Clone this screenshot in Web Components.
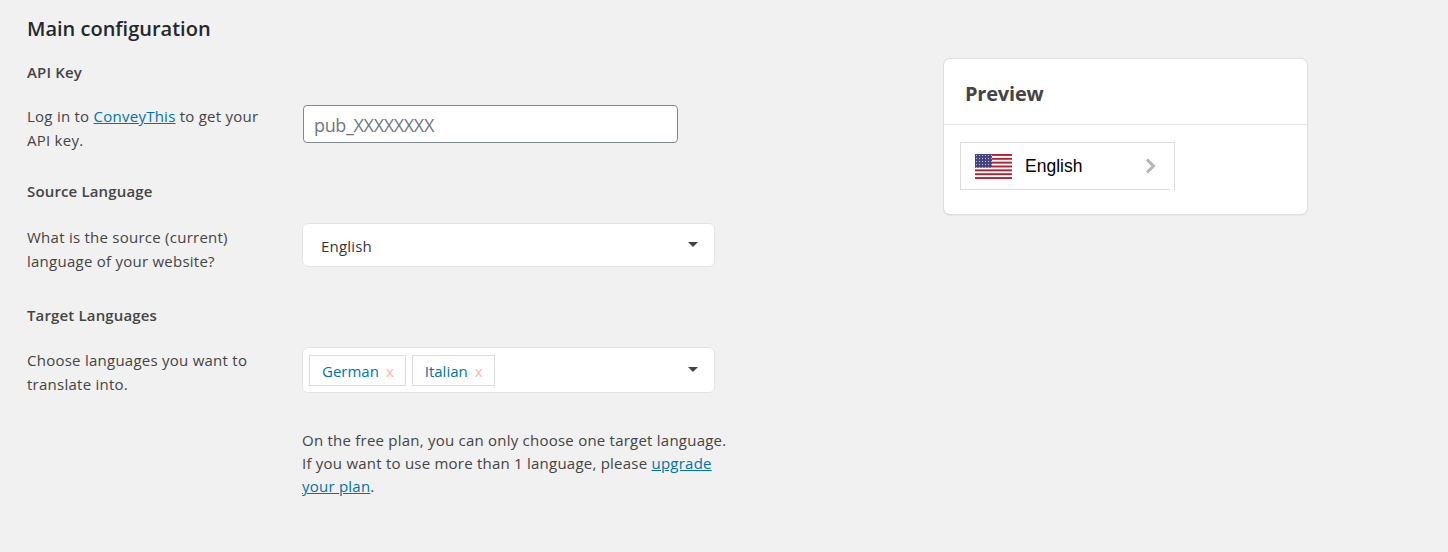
<!DOCTYPE html>
<html lang="en">
<head>
<meta charset="utf-8">
<title>Main configuration</title>
<style>
    html, body { margin: 0; background: #f1f1f1; }
    body { font-family: "Open Sans", "Noto Sans", sans-serif; font-size: 15px; letter-spacing: 0.25px; color: #444; }
    a { color: #0073aa; text-decoration: underline; }
</style>
</head>
<body>
<conf-page>
    <conf-title slot="title">Main configuration</conf-title>

    <conf-field heading="API Key" style="--top:21px; --head-gap:23px">
        <span slot="desc">Log in to <a href="#">ConveyThis</a> to get your<br>API key.</span>
        <conf-input placeholder="pub_XXXXXXXX"></conf-input>
    </conf-field>

    <conf-field heading="Source Language" style="--top:30px; --head-gap:25px; --select-top:-2px">
        <span slot="desc">What is the source (current)<br>language of your website?</span>
        <conf-select>English</conf-select>
    </conf-field>

    <conf-field heading="Target Languages" style="--top:33px; --head-gap:24px; --select-top:-1px">
        <span slot="desc">Choose languages you want to<br>translate into.</span>
        <conf-select multi>
            <conf-tag>German</conf-tag>
            <conf-tag>Italian</conf-tag>
        </conf-select>
    </conf-field>

    <conf-note>On the free plan, you can only choose one target language.<br>If you want to use more than 1 language, please <a href="#">upgrade<br>your plan</a>.</conf-note>

    <preview-card slot="side" heading="Preview">
        <lang-button>English</lang-button>
    </preview-card>
</conf-page>

<script>
class ConfPage extends HTMLElement {
    constructor() {
        super();
        this.attachShadow({ mode: 'open' });
        this.shadowRoot.innerHTML = `
            <style>
                :host { display: flex; height: 552px; box-sizing: border-box; padding-left: 27px; overflow: hidden; }
                .main { width: 917px; flex: none; padding-top: 16px; }
                .side { padding-top: 59px; }
            </style>
            <div class="main"><slot name="title"></slot><slot></slot></div>
            <div class="side"><slot name="side"></slot></div>
        `;
    }
}

class ConfTitle extends HTMLElement {
    constructor() {
        super();
        this.attachShadow({ mode: 'open' });
        this.shadowRoot.innerHTML = `
            <style>
                :host { display: block; font-size: 20px; font-weight: 600; line-height: 26px; color: #23282d; letter-spacing: 0; }
            </style>
            <slot></slot>
        `;
    }
}

class ConfField extends HTMLElement {
    constructor() {
        super();
        this.attachShadow({ mode: 'open' });
        this.shadowRoot.innerHTML = `
            <style>
                :host { display: block; margin-top: var(--top, 30px); }
                h3 { margin: 0 0 var(--head-gap, 24px); font-size: 15px; font-weight: 600; line-height: 18px; color: #444; letter-spacing: 0.15px; }
                .row { display: grid; grid-template-columns: 275px 1fr; }
                .desc { line-height: 24px; }
            </style>
            <h3></h3>
            <div class="row">
                <div class="desc"><slot name="desc"></slot></div>
                <div><slot></slot></div>
            </div>
        `;
        this.shadowRoot.querySelector('h3').textContent = this.getAttribute('heading');
    }
}

class ConfInput extends HTMLElement {
    constructor() {
        super();
        this.attachShadow({ mode: 'open' });
        this.shadowRoot.innerHTML = `
            <style>
                :host { display: block; width: 375px; margin: 1px 0 0 1px; }
                .box { box-sizing: border-box; height: 38px; padding: 2px 10px 0; display: flex; align-items: center;
                    background: #fff; border: 1px solid #7e8993; border-radius: 4px;
                    font-size: 18px; color: #72777c; letter-spacing: -0.35px; }
            </style>
            <div class="box"></div>
        `;
        this.shadowRoot.querySelector('.box').textContent = this.getAttribute('placeholder');
    }
}

class ConfSelect extends HTMLElement {
    constructor() {
        super();
        this.attachShadow({ mode: 'open' });
        const multi = this.hasAttribute('multi');
        this.shadowRoot.innerHTML = `
            <style>
                :host { display: block; width: 413px; margin-top: var(--select-top, 0); }
                .box { position: relative; box-sizing: border-box; display: flex; align-items: center; gap: 6px;
                    height: ${multi ? 46 : 44}px; padding: ${multi ? '0 6px' : '2px 18px 0'};
                    background: #fff; border: 1px solid #e3e3e3; border-radius: 6px;
                    color: #32373c; letter-spacing: 0.2px; }
                .arrow { position: absolute; right: 16px; top: 50%; margin-top: -3px; width: 0; height: 0;
                    border: 5px solid transparent; border-top: 5px solid #444; border-bottom: 0; }
            </style>
            <div class="box"><slot></slot><span class="arrow"></span></div>
        `;
    }
}

class ConfTag extends HTMLElement {
    constructor() {
        super();
        this.attachShadow({ mode: 'open' });
        this.shadowRoot.innerHTML = `
            <style>
                :host { display: inline-flex; align-items: center; box-sizing: border-box; height: 31px; padding: 1px 11px 0 12px;
                    border: 1px solid #ddd; color: #0073aa; letter-spacing: 0; }
                .x { margin-left: 7px; color: #ffb3b3; }
            </style>
            <slot></slot><span class="x">x</span>
        `;
    }
}

class ConfNote extends HTMLElement {
    constructor() {
        super();
        this.attachShadow({ mode: 'open' });
        this.shadowRoot.innerHTML = `
            <style>
                :host { display: block; width: 440px; margin: 33px 0 0 275px; line-height: 23px; letter-spacing: 0.23px; }
            </style>
            <slot></slot>
        `;
    }
}

class PreviewCard extends HTMLElement {
    constructor() {
        super();
        this.attachShadow({ mode: 'open' });
        this.shadowRoot.innerHTML = `
            <style>
                :host { display: block; box-sizing: border-box; width: 363px; height: 155px; background: #fff; border-radius: 6px;
                    box-shadow: 0 0 0 1px #dedede, 0 1px 2px rgba(0, 0, 0, 0.15); }
                h2 { margin: 0; height: 66px; box-sizing: border-box; padding: 3px 0 0 21px; display: flex; align-items: center;
                    border-bottom: 1px solid #e6e6e6; font-size: 20px; font-weight: 700; color: #444; letter-spacing: -0.2px; }
                .body { padding: 17px 16px 0; }
            </style>
            <h2></h2>
            <div class="body"><slot></slot></div>
        `;
        this.shadowRoot.querySelector('h2').textContent = this.getAttribute('heading');
    }
}

class LangButton extends HTMLElement {
    constructor() {
        super();
        this.attachShadow({ mode: 'open' });
        this.shadowRoot.innerHTML = `
            <style>
                :host { display: block; position: relative; box-sizing: border-box; width: 215px; height: 48px;
                    font-family: "Liberation Sans", Arial, sans-serif; font-size: 17.5px; letter-spacing: 0; color: #000; }
                .edge { box-sizing: border-box; height: 100%; display: flex; align-items: center; padding-left: 14px;
                    border: 1px solid #ddd; border-bottom: 0; }
                .edge::after { content: ""; position: absolute; left: 0; right: 5px; bottom: 0; height: 1px; background: #ddd; }
                .flag { width: 37px; height: 25px; flex: none; margin-right: 13px; }
                .chev { position: absolute; left: 185px; top: 16px; }
            </style>
            <div class="edge">
                <svg class="flag" viewBox="0 0 37 25">
                    <defs>
                        <pattern id="stars" width="3" height="3" patternUnits="userSpaceOnUse">
                            <rect width="3" height="3" fill="#46467f"/>
                            <rect x="1" y="1" width="1" height="1" fill="#b9b9d6"/>
                        </pattern>
                    </defs>
                    <rect width="37" height="25" fill="#fff"/>
                    <g fill="#b22234">
                        <rect y="0" width="37" height="1.92"/>
                        <rect y="3.85" width="37" height="1.92"/>
                        <rect y="7.69" width="37" height="1.92"/>
                        <rect y="11.54" width="37" height="1.92"/>
                        <rect y="15.38" width="37" height="1.92"/>
                        <rect y="19.23" width="37" height="1.92"/>
                        <rect y="23.08" width="37" height="1.92"/>
                    </g>
                    <rect width="17" height="13.5" fill="url(#stars)"/>
                </svg>
                <slot></slot>
                <svg class="chev" width="12" height="16" viewBox="0 0 12 16">
                    <path d="M2 1.5 L8.5 8 L2 14.5" fill="none" stroke="#b5b5b5" stroke-width="3"/>
                </svg>
            </div>
        `;
    }
}

customElements.define('conf-page', ConfPage);
customElements.define('conf-title', ConfTitle);
customElements.define('conf-field', ConfField);
customElements.define('conf-input', ConfInput);
customElements.define('conf-select', ConfSelect);
customElements.define('conf-tag', ConfTag);
customElements.define('conf-note', ConfNote);
customElements.define('preview-card', PreviewCard);
customElements.define('lang-button', LangButton);
</script>
</body>
</html>
